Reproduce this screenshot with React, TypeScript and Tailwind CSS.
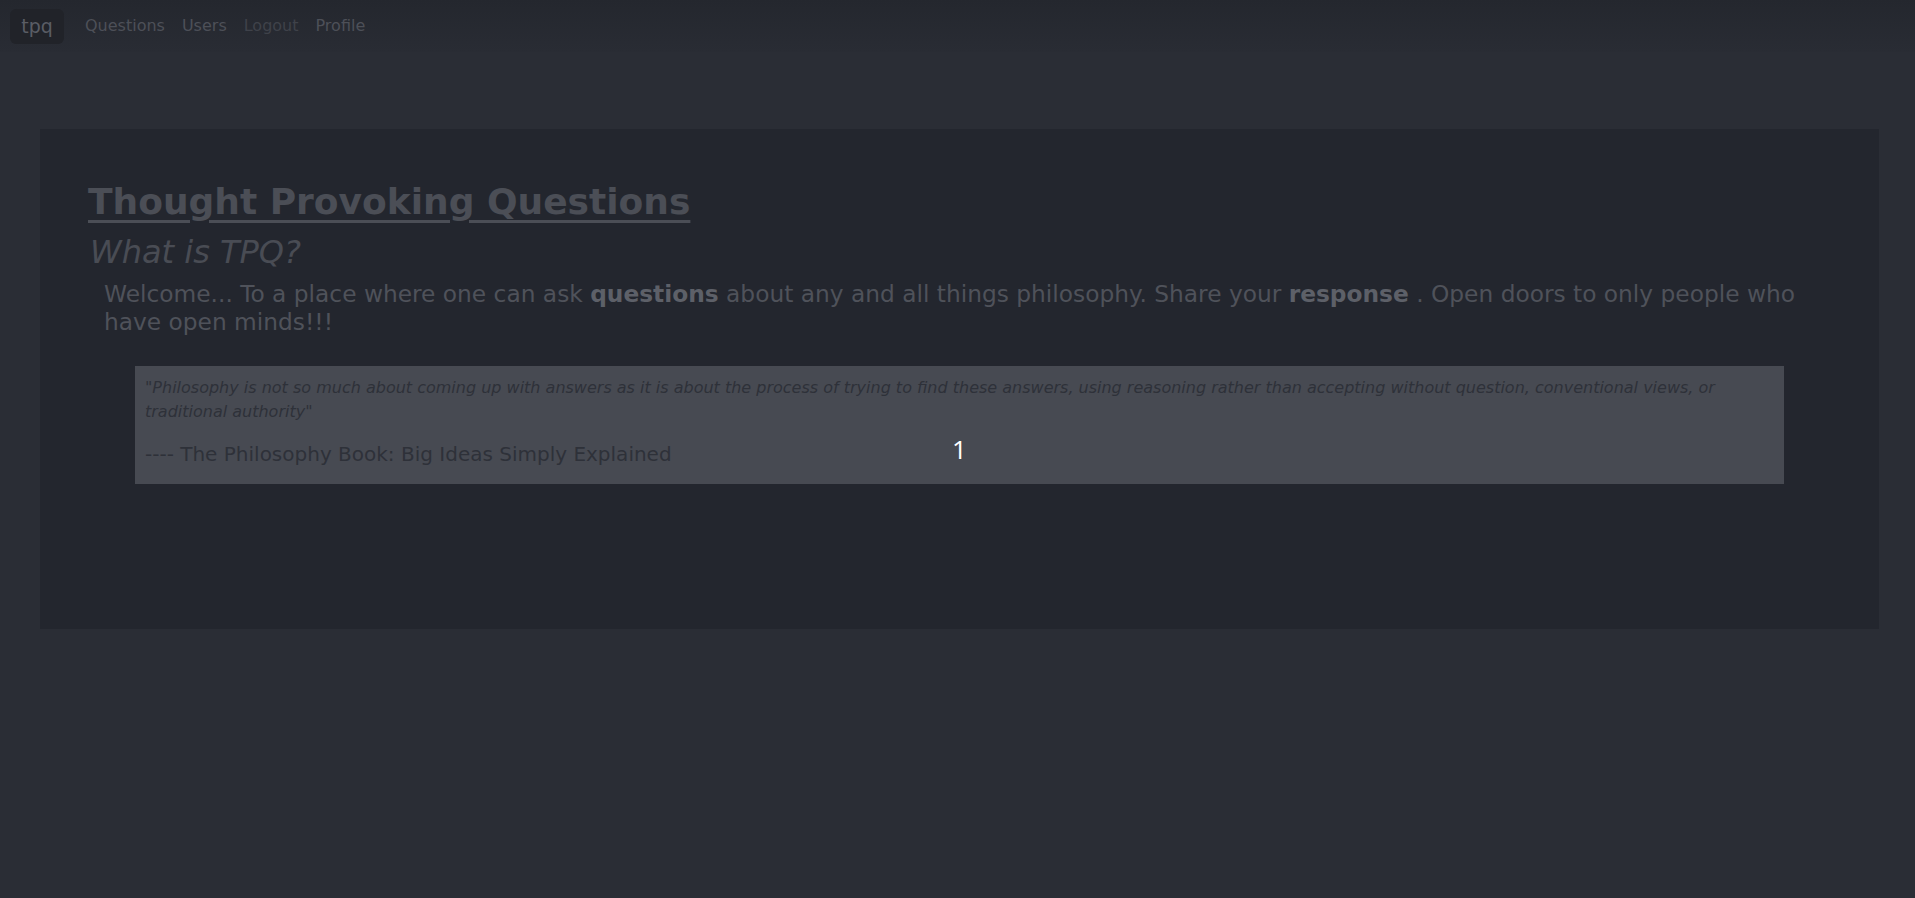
const font = "font-['DejaVu_Sans',sans-serif]";

const navLinks = [
  { label: "Questions", dim: false },
  { label: "Users", dim: false },
  { label: "Logout", dim: true },
  { label: "Profile", dim: false },
];

function Navbar() {
  return (
    <nav className="flex h-[52px] items-center gap-[21px] bg-gradient-to-b from-[#24272e] to-[#292c34] px-[10px]">
      <div className="flex h-[35px] w-[54px] items-center justify-center rounded-md bg-[#212329]">
        <span className="text-[19px] text-[#5a5d65]">tpq</span>
      </div>
      <ul className="flex items-center gap-[17px] text-[16px] leading-none">
        {navLinks.map((link) => (
          <li
            key={link.label}
            className={link.dim ? "text-[#3f424a]" : "text-[#4d5058]"}
          >
            {link.label}
          </li>
        ))}
      </ul>
    </nav>
  );
}

function QuoteBox() {
  return (
    <div className="relative mx-[47px] mt-[30px] bg-[#474a52] px-[10px] pb-[16px] pt-[10px]">
      <p className="text-[16px] italic leading-[24px] text-[#2e3139]">
        "Philosophy is not so much about coming up with answers as it is about
        the process of trying to find these answers, using reasoning rather than
        accepting without question, conventional views, or traditional
        authority"
      </p>
      <p className="mt-[16px] text-[20px] leading-[28px] text-[#2e3139]">
        ---- The Philosophy Book: Big Ideas Simply Explained
      </p>
      <span className="absolute left-1/2 top-[70px] -translate-x-1/2 font-['Open_Sans',sans-serif] text-[26px] leading-none text-white">
        1
      </span>
    </div>
  );
}

export default function App() {
  return (
    <div className={`min-h-[898px] bg-[#2a2d35] ${font}`}>
      <Navbar />
      <main className="pl-[40px] pr-[36px] pt-[77px]">
        <section className="h-[500px] bg-[#23262e] px-[48px] pt-[49px]">
          <h1 className="text-[36px] font-bold leading-[48px] text-[#4b4e56] underline decoration-[3px] underline-offset-[6px]">
            Thought Provoking Questions
          </h1>
          <h2 className="ml-[2px] mt-[6px] text-[32px] font-light italic leading-[40px] text-[#494c54]">
            What is TPQ?
          </h2>
          <p className="ml-[16px] mt-[8px] pr-[16px] text-[23.3px] leading-[28px] text-[#4f525a]">
            Welcome... To a place where one can ask{" "}
            <strong className="font-bold text-[#5d6068]">questions</strong> about
            any and all things philosophy. Share your{" "}
            <strong className="font-bold text-[#5d6068]">response</strong> . Open
            doors to only people who have open minds!!!
          </p>
          <QuoteBox />
        </section>
      </main>
    </div>
  );
}
